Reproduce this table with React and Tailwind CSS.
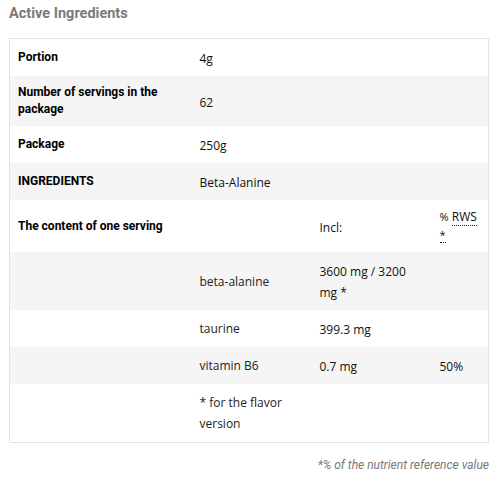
import React from 'react';

const rows = [
  { label: 'Portion', value: '4g' },
  { label: 'Number of servings in the package', value: '62' },
  { label: 'Package', value: '250g' },
  { label: 'INGREDIENTS', value: 'Beta-Alanine' },
];

const nutrients = [
  { name: 'beta-alanine', amount: '3600 mg / 3200 mg *', rws: '' },
  { name: 'taurine', amount: '399.3 mg', rws: '' },
  { name: 'vitamin B6', amount: '0.7 mg', rws: '50%' },
  { name: '* for the flavor version', amount: '', rws: '' },
];

const App = () => {
  // zebra rows: odd rows white, even rows gray
  const rowBg = (i) => (i % 2 === 0 ? 'bg-white' : 'bg-[#f5f5f5]');
  const val = "pl-[8px] align-middle leading-[21px] text-[#111] font-['Open_Sans',sans-serif] text-[12px]";

  return (
    <div className="w-[503px] h-[483px] bg-white px-[9px] pt-[5px] font-['Roboto',sans-serif]">
      <h3 className="text-[14.5px] leading-[18px] font-bold text-[#7a7a7a]">Active Ingredients</h3>

      <table className="mt-[15px] w-[480px] table-fixed border border-[#e3e3e3] border-collapse text-[12px]">
        <colgroup>
          <col className="w-[182px]" />
          <col className="w-[120px]" />
          <col className="w-[120px]" />
          <col />
        </colgroup>
        <tbody>
          {rows.map((r, i) => (
            <tr key={r.label} className={rowBg(i)}>
              <th className="pl-[8px] pr-2 py-[8px] text-left align-middle font-bold leading-[17px] text-black">
                {r.label}
              </th>
              <td colSpan={3} className={`${val} pt-[9px] pb-[7px]`}>
                {r.value}
              </td>
            </tr>
          ))}

          <tr className="bg-white">
            <th className="pl-[8px] py-[8px] text-left align-middle font-bold leading-[17px] text-black">
              The content of one serving
            </th>
            <td />
            <td className={`${val} pt-[9px] pb-[7px]`}>Incl:</td>
            <td className="pl-[8px] pr-[11px] py-[8px] align-middle leading-[18px] text-[#111] font-['Open_Sans',sans-serif]">
              <span className="text-[11px]">%</span>{' '}
              <abbr className="no-underline border-b border-dotted border-[#222] text-[12px]">RWS</abbr>{' '}
              <abbr className="no-underline border-b border-dotted border-[#222] text-[11px]">*</abbr>
            </td>
          </tr>

          {nutrients.map((n, i) => (
            <tr key={n.name} className={rowBg(i + 1)}>
              <td />
              <td className={`${val} py-[8px] pr-4 text-[#222]`}>{n.name}</td>
              <td className={`${val} pt-[9px] pb-[7px] pr-4`}>{n.amount}</td>
              <td className={`${val} pt-[9px] pb-[7px]`}>{n.rws}</td>
            </tr>
          ))}
        </tbody>
      </table>

      <p className="mt-[13px] w-[480px] text-right text-[12px] italic text-[#777]">
        *% of the nutrient reference value
      </p>
    </div>
  );
};

export default App;
